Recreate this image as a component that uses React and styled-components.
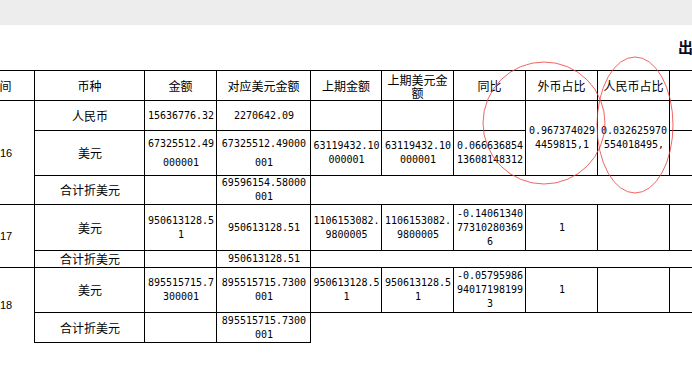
import React from 'react'
import styled, {createGlobalStyle} from 'styled-components'

const Global = createGlobalStyle`
    html, body {
        margin: 0;
        padding: 0;
        overflow: hidden;
        background: #fff;
    }
`;

const Page = styled.div`
    position: relative;
    width: 692px;
    height: 371px;
    overflow: hidden;
`;

const TopBar = styled.div`
    height: 25px;
    background: #ededed;
`;

const Title = styled.div`
    height: 45px;
    box-sizing: border-box;
    padding: 13px 0 0 678px;
    font-family: "Noto Sans CJK SC", sans-serif;
    font-size: 15px;
    font-weight: 700;
    line-height: 17px;
    color: #0a0a1e;
    white-space: nowrap;
`;

const Table = styled.table`
    margin-left: -36px;
    width: 777px;
    table-layout: fixed;
    border-collapse: collapse;
    color: #000;
`;

const Row = styled.tr`
    height: ${props => props.$h}px;
`;

const Head = styled.th`
    border: 1px solid #000;
    padding: 0 2px;
    font-family: "Noto Sans CJK SC", sans-serif;
    font-size: 12px;
    font-weight: 400;
    line-height: 13px;
    text-align: center;
    vertical-align: middle;
`;

const Cell = styled.td`
    border: 1px solid #000;
    padding: 0 1px 0 2px;
    font-family: ${props => props.$num ? '"DejaVu Sans Mono", monospace' : '"Noto Sans CJK SC", sans-serif'};
    font-size: ${props => props.$num ? '10px' : '12px'};
    line-height: ${props => props.$loose ? '19px' : '14px'};
    text-align: center;
    vertical-align: middle;
    word-break: break-all;
`;

const Year = styled(Cell)`
    font-family: "Liberation Sans", sans-serif;
    font-size: 11px;
    ${({$open}) => $open && `
    border-bottom: none;
    `}
`;

const Marks = styled.svg`
    position: absolute;
    left: 0;
    top: 0;
    pointer-events: none;
`;

const widths = [70, 110, 72, 94, 71, 72, 72, 72, 72, 72];

export default function App() {
    return (
        <Page>
            <Global/>
            <TopBar/>
            <Title>出口收汇统计表</Title>
            <Table>
                <colgroup>
                    {widths.map((w, i) => <col key={i} style={{width: w}}/>)}
                </colgroup>
                <tbody>
                <Row $h={30}>
                    <Head>时间</Head>
                    <Head>币种</Head>
                    <Head>金额</Head>
                    <Head>对应美元金额</Head>
                    <Head>上期金额</Head>
                    <Head>上期美元金额</Head>
                    <Head>同比</Head>
                    <Head>外币占比</Head>
                    <Head>人民币占比</Head>
                    <Head/>
                </Row>
                <Row $h={30}>
                    <Year rowSpan={3}>2016</Year>
                    <Cell>人民币</Cell>
                    <Cell $num>15636776.32</Cell>
                    <Cell $num>2270642.09</Cell>
                    <Cell/>
                    <Cell/>
                    <Cell/>
                    <Cell $num rowSpan={2}>0.9673740294459815,1</Cell>
                    <Cell $num rowSpan={2}>0.032625970554018495,</Cell>
                    <Cell/>
                </Row>
                <Row $h={45}>
                    <Cell>美元</Cell>
                    <Cell $num $loose>67325512.49000001</Cell>
                    <Cell $num $loose>67325512.49000001</Cell>
                    <Cell $num>63119432.10000001</Cell>
                    <Cell $num>63119432.10000001</Cell>
                    <Cell $num>0.06663685413608148312</Cell>
                    <Cell/>
                </Row>
                <Row $h={29}>
                    <Cell>合计折美元</Cell>
                    <Cell/>
                    <Cell $num>69596154.58000001</Cell>
                </Row>
                <Row $h={46}>
                    <Year rowSpan={2}>2017</Year>
                    <Cell>美元</Cell>
                    <Cell $num>950613128.51</Cell>
                    <Cell $num>950613128.51</Cell>
                    <Cell $num>1106153082.9800005</Cell>
                    <Cell $num>1106153082.9800005</Cell>
                    <Cell $num>-0.14061340773102803696</Cell>
                    <Cell $num>1</Cell>
                    <Cell/>
                    <Cell/>
                </Row>
                <Row $h={17}>
                    <Cell>合计折美元</Cell>
                    <Cell/>
                    <Cell $num>950613128.51</Cell>
                </Row>
                <Row $h={45}>
                    <Year rowSpan={2} $open>2018</Year>
                    <Cell>美元</Cell>
                    <Cell $num>895515715.7300001</Cell>
                    <Cell $num>895515715.7300001</Cell>
                    <Cell $num>950613128.51</Cell>
                    <Cell $num>950613128.51</Cell>
                    <Cell $num>-0.05795986940171981993</Cell>
                    <Cell $num>1</Cell>
                    <Cell/>
                    <Cell/>
                </Row>
                <Row $h={30}>
                    <Cell>合计折美元</Cell>
                    <Cell/>
                    <Cell $num>895515715.7300001</Cell>
                </Row>
                </tbody>
            </Table>
            <Marks width="692" height="371" viewBox="0 0 692 371">
                <ellipse cx="544" cy="123" rx="61" ry="61" fill="none" stroke="#f03c3c" strokeOpacity="0.8" strokeWidth="1"/>
                <ellipse cx="635" cy="125" rx="38" ry="68" fill="none" stroke="#f03c3c" strokeOpacity="0.8" strokeWidth="1"/>
            </Marks>
        </Page>
    )
}
